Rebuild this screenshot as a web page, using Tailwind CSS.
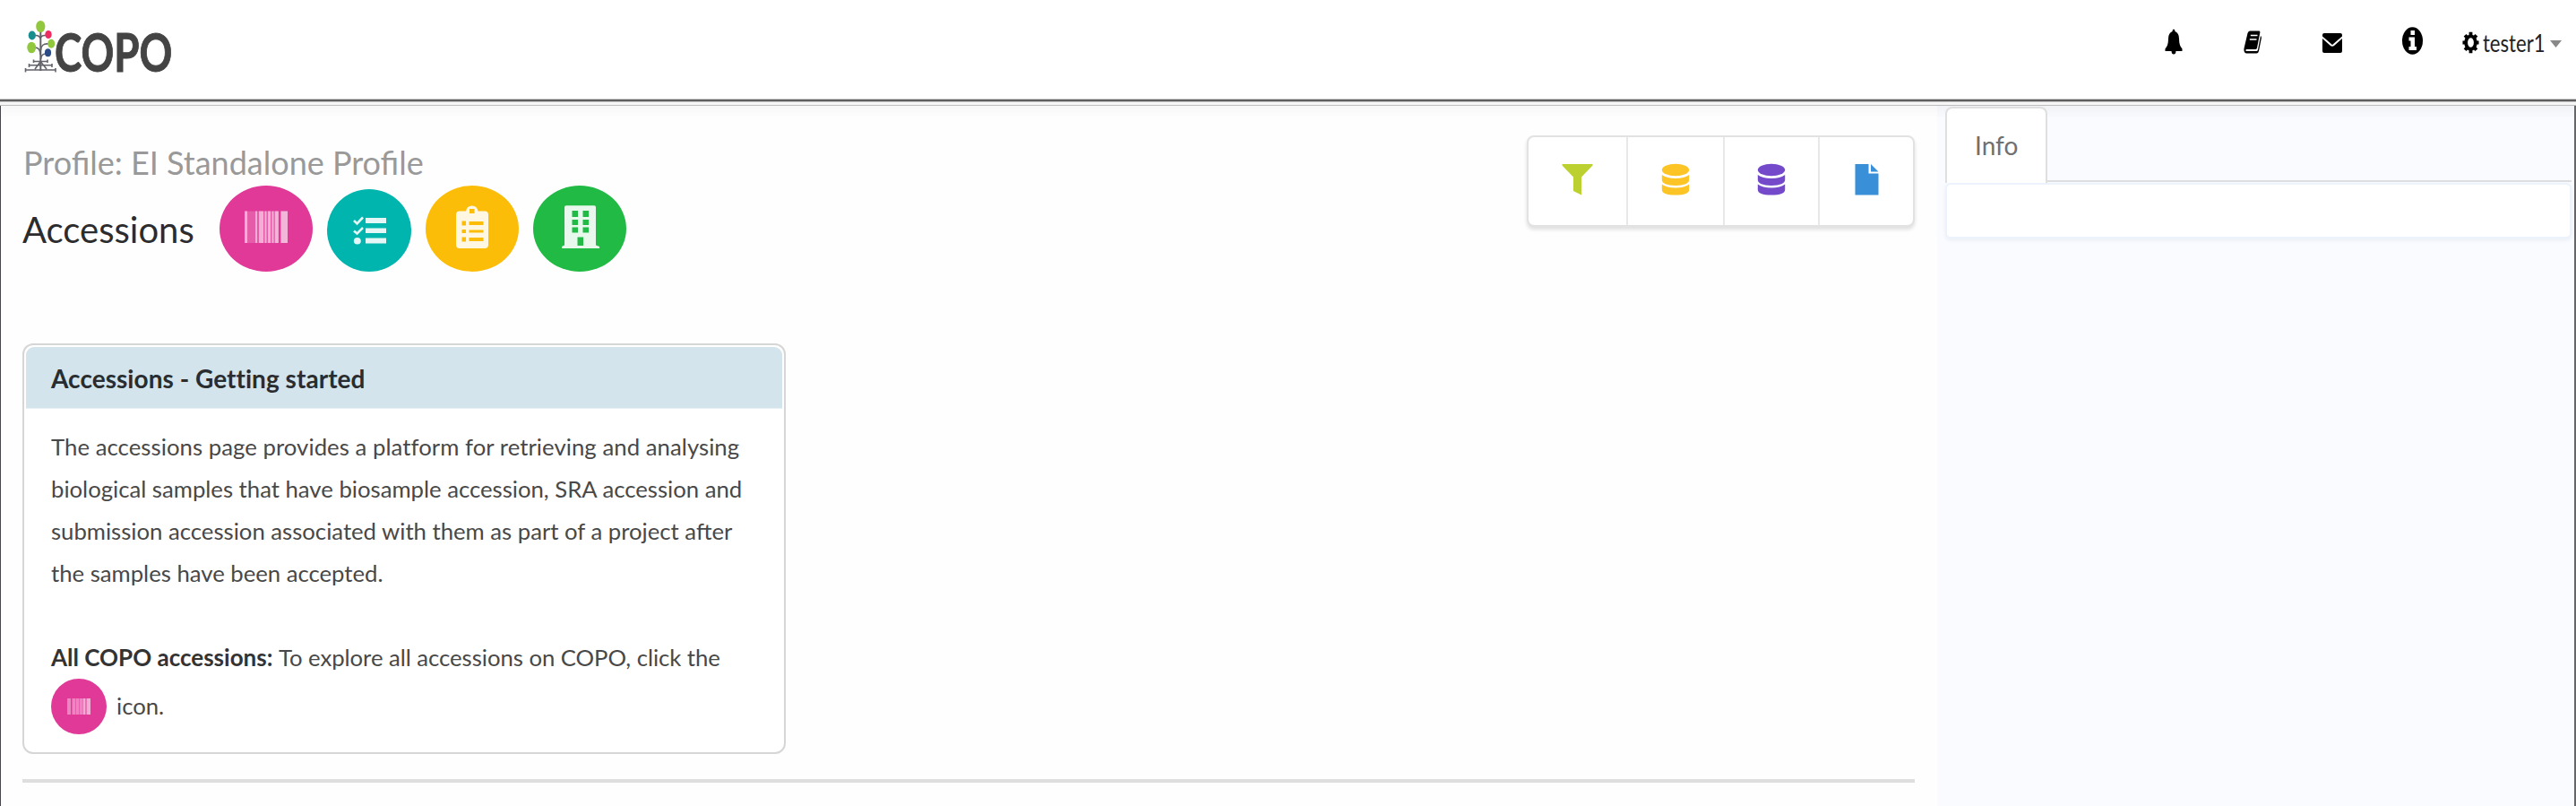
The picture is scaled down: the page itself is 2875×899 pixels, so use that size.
<!DOCTYPE html>
<html lang="en">
<head>
<meta charset="utf-8">
<title>COPO - Accessions</title>
<script src="https://cdn.jsdelivr.net/npm/@tailwindcss/browser@4"></script>
</head>
<body class="w-[2875px] h-[899px] overflow-hidden bg-white font-[Lato,'Noto_Sans',sans-serif] text-[#484848] flex flex-col">

<header class="h-[110px] shrink-0 flex items-start justify-between pl-[27px] pr-[16px]">
  <a class="flex">
    <svg class="w-[36px] h-[82px] shrink-0" viewBox="27 0 36 82" fill="none">
      <g stroke="#62626a" stroke-width="1.6">
        <path stroke-width="2" d="M45.3 34V79"/>
        <path d="M39 39.500Q44 39 45 43Q46 39 51 39.500M39 53Q45 53 45 61M54 49Q46 48 45.500 56M51 60Q46 60 45.500 66"/>
        <path d="M38 68.500H53M33 72.800H58M28 78H62.500M37.500 66.500V70M53 66.500V70M32.500 71V75M58 71V75M28.500 76V80.500M62 76V80.500M45 69L39 77M45.500 69L52 77"/>
      </g>
      <ellipse cx="45.300" cy="29.500" rx="5.100" ry="6.600" fill="#92c83e"/>
      <ellipse cx="35.800" cy="39.500" rx="4.100" ry="5" fill="#178f8f"/>
      <ellipse cx="54" cy="38.500" rx="3.700" ry="4.600" fill="#ee2c62"/>
      <ellipse cx="57.200" cy="48.700" rx="4" ry="5" fill="#92c83e"/>
      <ellipse cx="35.200" cy="53" rx="4.900" ry="6.300" fill="#92c83e"/>
      <ellipse cx="53.500" cy="58.700" rx="3.600" ry="4.500" fill="#2b4c86"/>
    </svg>
    <span class="mt-[25px] -ml-[2px] h-[64px] w-[134px] font-bold text-[60px] leading-[64px] text-[#444] whitespace-nowrap origin-left scale-x-[0.76] [-webkit-text-stroke:1px_#444]">COPO</span>
  </a>
  <nav class="h-[94px] flex items-center text-black">
    <svg class="w-[20px] h-[30px]" viewBox="0 0 20 30" fill="currentColor"><path d="M10 .5Q11.500 .8 11.500 3Q16 5 16 11Q16 19 19.500 22.500V25H12.500Q12.300 28.500 10 28.500T7.500 25H.5V22.500Q4 19 4 11Q4 5 8.500 3Q8.500 .8 10 .5Z"/></svg>
    <svg class="ml-[68px] w-[20px] h-[26px]" viewBox="0 0 20 26"><path fill="currentColor" d="M7 .5H17.500Q18.800 1 18.200 3L15 19.500Q14.500 21 13 21H3.500Q2 21.200 2.500 22.500Q2.700 23 3.500 23H14.500Q15.500 23 16 21.500L19 6Q20.300 7 19.800 9L17 23Q16.300 25.500 14.500 25.500H3Q0 25 .5 20L4.500 3Q5.200.7 7 .5Z"/><path stroke="#fff" stroke-width="1.500" d="M7.800 5.500H15.500M6.800 10H14.500"/></svg>
    <svg class="ml-[68px] w-[22px] h-[22px] mt-px" viewBox="0 0 22 22" fill="currentColor"><path d="M2 0H20Q22 0 22 2V3.500L11 13L0 3.500V2Q0 0 2 0ZM0 6L9 14Q11 15.500 13 14L22 6V20Q22 22 20 22H2Q0 22 0 20Z"/></svg>
    <svg class="ml-[67px] w-[23px] h-[31px] -mt-[4px]" viewBox="0 0 23 31"><ellipse cx="11.500" cy="15.500" rx="11.500" ry="15.300" fill="currentColor"/><path fill="#fff" d="M9.500 4H14V9H9.500ZM7.500 11.500H14V22H16V26H7.500V22H9.500V15.500H7.500Z"/></svg>
    <svg class="ml-[44px] w-[19px] h-[25px]" viewBox="0 0 20 26"><g fill="none" stroke="currentColor"><ellipse cx="10" cy="13" rx="5.600" ry="7.600" stroke-width="4"/><path stroke-width="4" d="M10 .7V5M10 21V25.300M.5 13H4M16 13H19.500M3.300 4.300L6 7.500M14 18.500L16.700 21.700M3.300 21.700L6 18.500M14 7.500L16.700 4.300"/></g></svg>
    <span class="ml-[4px] w-[67px] text-[26px] leading-[32px] text-[#222] whitespace-nowrap mt-[1px]"><span class="inline-block origin-left scale-x-[0.85]">tester1</span></span>
    <svg class="ml-[8px] w-[13px] h-[8px] mt-[3px]" viewBox="0 0 13 8"><path fill="#888" d="M0 0H13L6.500 8Z"/></svg>
  </nav>
</header>
<div class="shrink-0 h-[8px] flex flex-col">
  <div class="h-px bg-[#c8c8c8]"></div><div class="h-[2px] bg-[#5f5f5f]"></div><div class="h-px bg-[#c4c4c4]"></div><div class="h-[3px] bg-[#f6f6f6]"></div><div class="h-px bg-[#bdbdbd]"></div>
</div>

<div class="flex-1 flex border-l-[1.5px] border-[#48484c] bg-linear-to-b from-[#f7f7f7] to-[#fefefe] to-[14px]">
  <main class="w-[2161px] shrink-0 pl-[24px] pr-[25px]">
    <div class="flex justify-between">
      <div class="pt-[40px]">
        <h2 class="pl-[1px] text-[36px] leading-[46px] text-[#999] whitespace-nowrap">Profile: EI Standalone Profile</h2>
        <div class="mt-[3px] h-[96px] flex items-end gap-[16px]">
          <h1 class="w-[204px] text-[40px] leading-[94px] text-[#2c2c2e]">Accessions</h1>
          <button class="w-[104px] h-[96px] rounded-[50%] bg-[#e03997]">
            <svg class="w-full h-full" viewBox="245 207 104 96" fill="#fff">
              <g opacity=".18"><path d="M273 235.500H321V271H273Z"/></g>
              <path fill-opacity=".5" d="M273 235.500h3v35.500h-3zM285 235.500h2v35.500h-2zM289 235.500h5v35.500h-5zM295.500 235.500h2v35.500h-2zM299 235.500h3v35.500h-3zM303.500 235.500h2v35.500h-2z"/>
              <path fill-opacity=".55" d="M306.800 235.500h4v35.500h-4zM313.500 235.500h7.500v35.500h-7.500z"/>
              <path fill="#e03997" d="M311 235h2v37h-2z"/>
            </svg>
          </button>
          <button class="w-[94px] h-[92px] rounded-[50%] bg-[#00b5ad]">
            <svg class="w-full h-full" viewBox="365 211 94 92" fill="#e4f7f6"><path d="M408 243h23v6h-23zM408 254.500h23v5.500h-23zM408 265.500h23v6h-23z"/><ellipse cx="398.800" cy="268.700" rx="4" ry="3.800"/><path fill="none" stroke="#e4f7f6" stroke-width="2.600" d="M395 246L398.500 249.500L405 242.500M395 257.500L398.500 260.500L405 254"/></svg>
          </button>
          <button class="w-[104px] h-[96px] rounded-[50%] bg-[#fbbd08]">
            <svg class="w-full h-full" viewBox="475 207 104 96"><path fill="#fff7e1" d="M513 235.500H520Q521 229.500 526.800 229.500T533.500 235.500H541Q545 235.500 545 239.500V273Q545 277 541 277H513Q509 277 509 273V239.500Q509 235.500 513 235.500Z"/><path fill="#fbbd08" d="M524 233h5.500v5h-5.500zM523.500 247h16v4h-16zM523.500 256.500h16v3h-16zM523.500 265h16v4h-16zM515.500 246.500h4.500v5h-4.500zM515.500 256h4.500v4h-4.500zM515.500 264.500h4.500v5h-4.500z"/></svg>
          </button>
          <button class="w-[104px] h-[96px] rounded-[50%] bg-[#21ba45]">
            <svg class="w-full h-full" viewBox="595 207 104 96"><path fill="#e8f8ec" d="M630 231Q630 229.300 632 229.300H663Q665 229.300 665 231V273.500L669 275V277H627V275L630 273.500Z"/><path fill="#21ba45" d="M638.500 235h6.500v7h-6.500zM650.500 235h6.500v7h-6.500zM638.500 245h6.500v6h-6.500zM650.500 245h6.500v6h-6.500zM638.500 253.500h6.500v6h-6.500zM650.500 253.500h6.500v6h-6.500zM644.500 264.500h6.500v9.500h-6.500z"/></svg>
          </button>
        </div>
      </div>
      <div class="mt-[33px] w-[433px] h-[102px] flex rounded-[8px] border-2 border-[#e2e2e2] bg-white shadow-[0_3px_4px_rgba(0,0,0,0.13)]">
        <button class="w-[111px] border-r-2 border-[#e8e8e8]"><svg class="w-full h-full" viewBox="1706 153 109 98"><path fill="#bcd02f" d="M1743.500 183H1777.500V184.500L1765 197.500V217.500L1756 213V197.500L1743.500 184.500Z"/></svg></button>
        <button class="w-[108px] border-r-2 border-[#e8e8e8] text-[#fcc425]"><svg class="w-full h-full" viewBox="1817 153 106 98" fill="currentColor"><ellipse cx="1870" cy="189.500" rx="15.200" ry="6.800"/><path d="M1854.800 195Q1860 199 1870 199T1885.200 195V200.500Q1885 206.500 1870 207Q1855 206.500 1854.800 200.500ZM1854.800 205.500Q1860 209.500 1870 209.500T1885.200 205.500V211.500Q1885 217.500 1870 217.500Q1855 217.500 1854.800 211.500Z"/></svg></button>
        <button class="w-[106px] border-r-2 border-[#e8e8e8] text-[#744acb]"><svg class="w-full h-full" viewBox="1926 153 104 98" fill="currentColor"><ellipse cx="1978" cy="189.500" rx="15.200" ry="6.800"/><path d="M1962.800 195Q1968 199 1978 199T1993.200 195V200.500Q1993 206.500 1978 207Q1963 206.500 1962.800 200.500ZM1962.800 205.500Q1968 209.500 1978 209.500T1993.200 205.500V211.500Q1993 217.500 1978 217.500Q1963 217.500 1962.800 211.500Z"/></svg></button>
        <button class="flex-1"><svg class="w-full h-full" viewBox="2031 153 104 98"><path fill="#3990d8" d="M2070.500 183H2085.500V193.500H2096.500V217.500H2070.500ZM2088 183L2096.500 191.500H2088Z"/></svg></button>
      </div>
    </div>

    <section class="mt-[80px] w-[852px] h-[458px] rounded-[12px] border-2 border-[#d6d6d6] bg-white p-[2px]">
      <h3 class="h-[69px] rounded-t-[9px] bg-[#d3e4ec] border-b border-[#e9f0f3] pl-[28px] text-[28px] leading-[70px] tracking-[0.04px] font-bold text-[#2a2d30]">Accessions - Getting started</h3>
      <div class="pt-[19px] pl-[28px] text-[25.7px] leading-[46.9px] whitespace-nowrap">
        <p><span class="tracking-[0.06px]">The accessions page provides a platform for retrieving and analysing</span><br>biological samples that have biosample accession, SRA accession and<br>submission accession associated with them as part of a project after<br>the samples have been accepted.</p>
        <p class="mt-[46.9px]"><b class="text-[26px] leading-none text-[#333]">All COPO accessions:</b> <span class="tracking-[-0.03px]">To explore all accessions on COPO, click the</span></p>
        <p class="mt-[1px] flex items-center gap-[11px]">
          <span class="w-[62px] h-[62px] rounded-full bg-[#e03997]">
            <svg class="w-full h-full" viewBox="57 757 62 62"><path fill="#ec86c0" d="M75 779h4v18h-4zM80.500 779h4v18h-4zM85 779h3.500v18h-3.500zM89 779h3v18h-3z"/><path fill="#f3add5" d="M92.500 779h3v18h-3zM96.500 779h4.500v18h-4.500z"/></svg>
          </span>
          <span class="-mt-[1px]">icon.</span>
        </p>
      </div>
    </section>
    <hr class="mt-[28px] h-[4px] border-0 bg-[#dedede]">
  </main>
  <aside class="flex-1 bg-linear-to-b from-[#f1f2f6] to-[#f9fbff] to-[14px] border-r-2 border-[#666] pl-[9px] pr-[3px]">
    <div class="h-[86px] flex items-stretch">
      <div class="mt-[1px] w-[114px] rounded-t-[8px] border-2 border-b-0 border-[#dfdfdf] bg-white text-[28px] leading-[83px] pl-[31px] text-[#707070]">Info</div>
      <div class="flex-1 mb-[1px] border-b-2 border-[#dcdee0]"></div>
    </div>
    <div class="h-[62px] rounded-[6px] border-2 border-[#edf3fd] bg-white shadow-[0_2px_4px_rgba(60,90,140,0.08)]"></div>
  </aside>
</div>
</body>
</html>
